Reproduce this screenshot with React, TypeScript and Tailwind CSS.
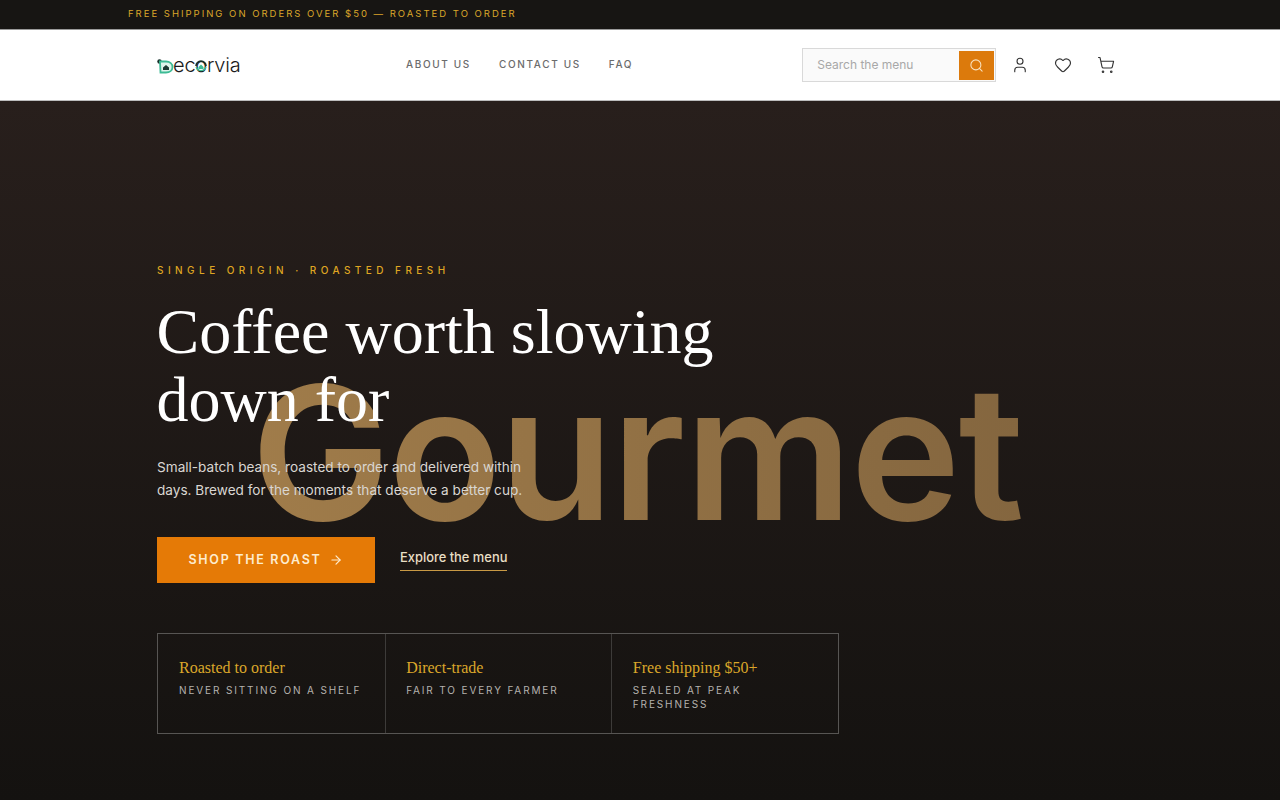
import React from "react";
import { Search, User, Heart, ShoppingCart, ArrowRight } from "lucide-react";

function Logo() {
  return (
    <div className="relative flex items-center h-[24px] w-[84px]">
      <svg width="17" height="17" viewBox="0 0 17 17" className="shrink-0 -mr-[1px] mt-[2px]">
        <circle cx="2.5" cy="3.5" r="2.2" fill="#16302a" />
        <path d="M3 3.5 L9 3.5 C13 3.5 15.5 6 15.5 9 C15.5 12.5 12.5 14.5 9 14.5 L3.5 14.5 Z" fill="#dff5ec" stroke="#3dbb95" strokeWidth="1.8" />
        <path d="M6 9.5 L9 7 L12 9.5 V12 H6 Z" fill="#1c3a33" />
      </svg>
      <span className="text-[20px] leading-none font-light text-[#1a1a1a] font-['Inter',sans-serif] tracking-[-0.2px]">ecorvia</span>
      <svg width="12" height="12" viewBox="0 0 12 12" className="absolute left-[38px] top-[7px]">
        <path d="M1 6 A5 5 0 0 1 11 6" fill="none" stroke="#16302a" strokeWidth="1.6" />
        <path d="M1.2 7 A5 5 0 0 0 10.8 7" fill="none" stroke="#3dbb95" strokeWidth="1.4" />
        <path d="M3.5 7 L6 4.5 L8.5 7 V9 H3.5 Z" fill="#3dbb95" />
      </svg>
    </div>
  );
}

function Stat({ title, sub, border, narrow }: { title: string; sub: string; border?: boolean; narrow?: boolean }) {
  return (
    <div className={`pt-[24px] ${narrow ? "pr-[40px]" : "pr-[10px]"} ${border ? "pl-[20.5px] border-l border-[#3d3b39]" : "pl-[21px]"}`}>
      <div className="font-['Liberation_Serif',serif] text-[16px] leading-[20px] text-[#dba72a]">{title}</div>
      <div className="mt-[5px] text-[10px] leading-[14px] tracking-[1.87px] text-[#b5b2ae] font-['Inter',sans-serif]">{sub}</div>
    </div>
  );
}

export default function App() {
  return (
    <div className="w-[1280px] h-[800px] overflow-hidden flex flex-col font-['Inter',sans-serif]">
      <div className="h-[30px] shrink-0 bg-[#171513] border-b border-[#9a9a9a] pl-[128px] flex items-center">
        <span className="text-[9.5px] tracking-[2px] text-[#dba72a]">FREE SHIPPING ON ORDERS OVER $50 — ROASTED TO ORDER</span>
      </div>
      <header className="h-[71px] shrink-0 bg-white border-b border-[#bdbdbd] flex items-center pl-[157px]">
        <Logo />
        <nav className="ml-[165px] mb-[2px] flex gap-[28px] text-[10px] tracking-[1.65px] text-[#6b6b6b] font-medium">
          <span>ABOUT US</span>
          <span>CONTACT US</span>
          <span>FAQ</span>
        </nav>
        <div className="ml-[169px] w-[194px] h-[34px] border border-[#d9d9d9] bg-[#fafafa] flex items-center justify-between pr-[1px]">
          <span className="pl-[14px] text-[12px] text-[#a8a8a8]">Search the menu</span>
          <div className="w-[35px] h-[29px] bg-[#dc7a0c] flex items-center justify-center">
            <Search size={15} strokeWidth={1.7} className="text-[#f8e2c0]" />
          </div>
        </div>
        <div className="ml-[15px] flex items-center gap-[25px] text-[#333333]">
          <User size={18} strokeWidth={1.5} />
          <Heart size={18} strokeWidth={1.5} />
          <ShoppingCart size={18} strokeWidth={1.5} />
        </div>
      </header>
      <main className="relative flex-1 bg-gradient-to-b from-[#281f1c] to-[#141210] pl-[157px] pt-[161px]">
        <div className="absolute left-[251px] top-[250px] text-[186px] leading-[204px] font-semibold tracking-[-2px] bg-gradient-to-r from-[#a07c4a] to-[#84663f] bg-clip-text text-transparent font-['Inter',sans-serif]">Gourmet</div>
        <div className="relative">
          <div className="text-[10px] leading-[16px] tracking-[4.45px] text-[#dfa522] font-medium">SINGLE ORIGIN · ROASTED FRESH</div>
          <h1 className="mt-[20px] -ml-[0.5px] w-[640px] font-['Liberation_Serif',serif] text-[64px] leading-[68px] text-white">Coffee worth slowing down for</h1>
          <p className="mt-[22px] w-[380px] text-[13.6px] leading-[23px] text-[#d9d6d2]">Small-batch beans, roasted to order and delivered within days. Brewed for the moments that deserve a better cup.</p>
          <div className="mt-[35px] flex items-center">
            <div className="w-[218px] h-[46px] bg-[#e57a06] flex items-center justify-center gap-[8px] text-[12.5px] font-semibold tracking-[1.7px] text-[#fdeccf]">
              <span>SHOP THE ROAST</span>
              <ArrowRight size={14} strokeWidth={2} />
            </div>
            <div className="ml-[25px] mb-[2px] pb-[2px] border-b border-[#c99a45] text-[12.9px] leading-[20px] font-medium text-[#e9dfc5]">Explore the menu</div>
          </div>
          <div className="mt-[50px] w-[682px] h-[101px] border border-[#575553] grid grid-cols-3">
            <Stat title="Roasted to order" sub="NEVER SITTING ON A SHELF" />
            <Stat title="Direct-trade" sub="FAIR TO EVERY FARMER" border />
            <Stat title="Free shipping $50+" sub="SEALED AT PEAK FRESHNESS" border narrow />
          </div>
        </div>
      </main>
    </div>
  );
}
